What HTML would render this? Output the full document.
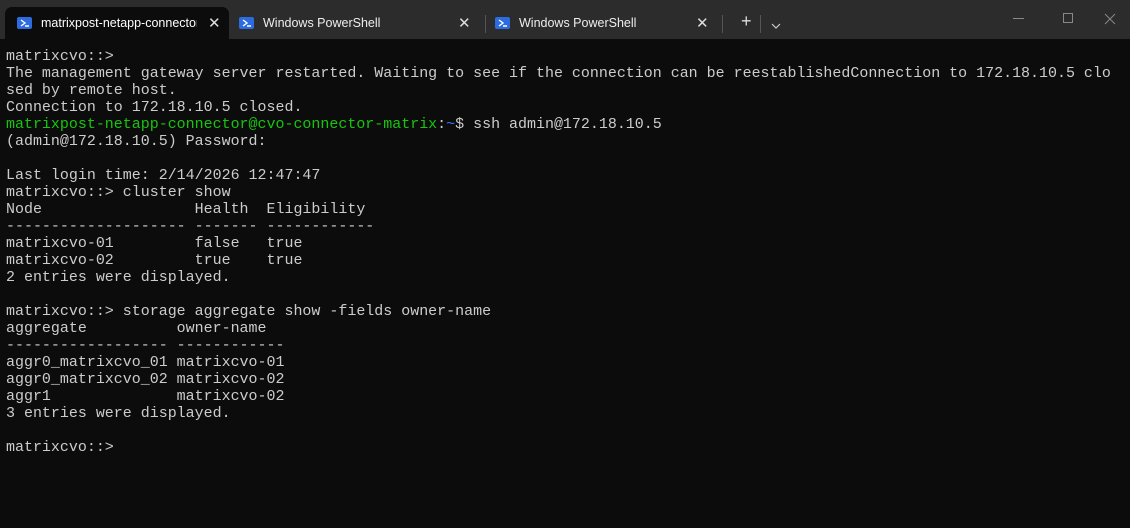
<!DOCTYPE html>
<html><head><meta charset="utf-8"><style>
*{margin:0;padding:0;box-sizing:border-box}
body{width:1130px;height:528px;background:#0c0c0c;overflow:hidden;font-family:"Liberation Sans",sans-serif}
.bar{position:absolute;left:0;top:0;width:1130px;height:39px;background:#2c2c2c}
.tab{position:absolute;top:7px;height:32px;color:#fff;font-size:12.5px}
.tab.active{background:#0c0c0c;border-radius:7px 7px 0 0}
.tab .t{position:absolute;left:36px;top:9px;white-space:nowrap;overflow:hidden}
.tab .x{position:absolute;top:7px;font-size:15px;color:#ddd}
.ico{position:absolute;left:12px;top:10px;width:15px;height:12px;background:#2c6ce0;border-radius:2px}
.ico svg{position:absolute;left:0;top:0}
.sep{position:absolute;top:15px;width:1px;height:18px;background:#555}
pre{position:absolute;left:6px;top:49px;font-family:"Liberation Mono",monospace;font-size:14.98px;line-height:17px;color:#cccccc}
.g{color:#16c60c}.b{color:#3b78ff}
</style></head><body>
<div class="bar">
 <div class="tab active" style="left:5px;width:224px">
  <div class="ico"><svg width="15" height="12"><path d="M4 3l4 3-4 3M8 9h4" stroke="#fff" stroke-width="1.4" fill="none"/></svg></div>
  <div class="t" style="width:156px">matrixpost-netapp-connector</div>
  <div class="x" style="left:203px">✕</div>
 </div>
 <div class="tab" style="left:229px;width:250px">
  <div class="ico" style="left:10px"><svg width="15" height="12"><path d="M4 3l4 3-4 3M8 9h4" stroke="#fff" stroke-width="1.4" fill="none"/></svg></div>
  <div class="t" style="left:34px;color:#eee">Windows PowerShell</div>
  <div class="x" style="left:229px">✕</div>
 </div>
 <div class="sep" style="left:485px"></div>
 <div class="tab" style="left:485px;width:230px">
  <div class="ico" style="left:10px"><svg width="15" height="12"><path d="M4 3l4 3-4 3M8 9h4" stroke="#fff" stroke-width="1.4" fill="none"/></svg></div>
  <div class="t" style="left:34px;color:#eee">Windows PowerShell</div>
  <div class="x" style="left:211px">✕</div>
 </div>
 <div class="sep" style="left:722px"></div>
 <div style="position:absolute;left:741px;top:11px;color:#ddd;font-size:18px">+</div>
 <div class="sep" style="left:760px"></div>
 <div style="position:absolute;left:771px;top:17px;"><svg width="10" height="8"><path d="M1 2l4 4 4-4" stroke="#ccc" stroke-width="1.2" fill="none"/></svg></div>
 <div style="position:absolute;left:1013px;top:18px;width:11px;height:1px;background:#888"></div>
 <div style="position:absolute;left:1063px;top:13px;width:10px;height:10px;border:1px solid #888"></div>
 <div style="position:absolute;left:1104px;top:12px"><svg width="12" height="12"><path d="M1 1l10 10M11 1L1 11" stroke="#888" stroke-width="1"/></svg></div>
</div>
<pre>matrixcvo::&gt;
The management gateway server restarted. Waiting to see if the connection can be reestablishedConnection to 172.18.10.5 clo
sed by remote host.
Connection to 172.18.10.5 closed.
<span class="g">matrixpost-netapp-connector@cvo-connector-matrix</span>:<span class="b">~</span>$ ssh admin@172.18.10.5
(admin@172.18.10.5) Password:

Last login time: 2/14/2026 12:47:47
matrixcvo::&gt; cluster show
Node                 Health  Eligibility
-------------------- ------- ------------
matrixcvo-01         false   true
matrixcvo-02         true    true
2 entries were displayed.

matrixcvo::&gt; storage aggregate show -fields owner-name
aggregate          owner-name
------------------ ------------
aggr0_matrixcvo_01 matrixcvo-01
aggr0_matrixcvo_02 matrixcvo-02
aggr1              matrixcvo-02
3 entries were displayed.

matrixcvo::&gt;</pre>
</body></html>
